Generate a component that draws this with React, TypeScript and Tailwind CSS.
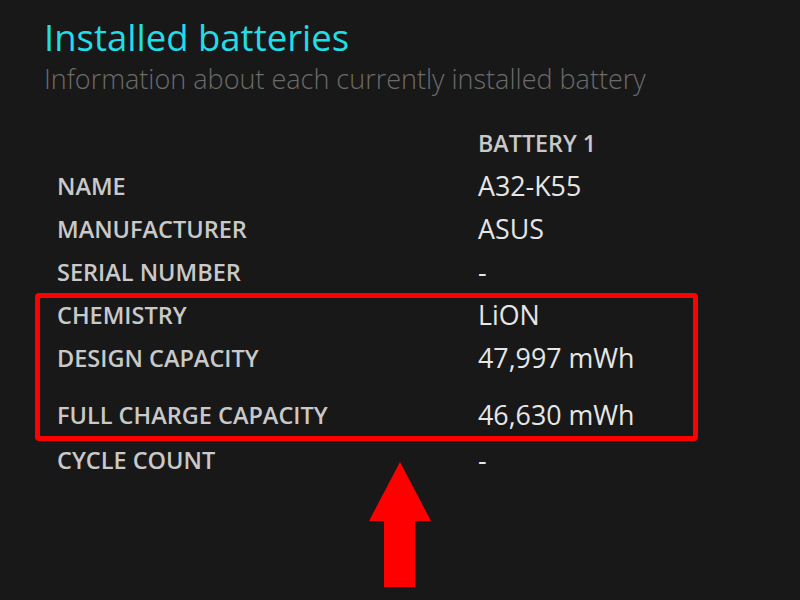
import React from "react";

const rows: { label: string; value: string; extra?: string }[] = [
  { label: "NAME", value: "A32-K55" },
  { label: "MANUFACTURER", value: "ASUS" },
  { label: "SERIAL NUMBER", value: "-" },
  { label: "CHEMISTRY", value: "LiON" },
  { label: "DESIGN CAPACITY", value: "47,997 mWh" },
  { label: "FULL CHARGE CAPACITY", value: "46,630 mWh", extra: "mt-[14px]" },
  { label: "CYCLE COUNT", value: "-", extra: "mt-[2px]" },
];

export default function App() {
  return (
    <div
      className="relative w-[800px] h-[600px] overflow-hidden bg-[#181818]"
      style={{ fontFamily: '"Open Sans", "Noto Sans", sans-serif' }}
    >
      <div className="pl-[44px] pt-[14px]">
        <h1 className="text-[36.5px] leading-[46px] text-[#22dde6] font-normal">
          Installed batteries
        </h1>
        <p className="text-[27px] leading-[38px] text-[#6b6b6b] font-light">
          Information about each currently installed battery
        </p>
      </div>
      <div className="pl-[57px] mt-[24px]">
        <div className="flex h-[43px] items-center">
          <div className="w-[421px]" />
          <div className="text-[23.3px] font-semibold text-[#c9c9c9]">BATTERY 1</div>
        </div>
        {rows.map((r) => (
          <div key={r.label} className={`flex h-[43px] items-center ${r.extra ?? ""}`}>
            <div className="w-[421px] text-[23.5px] font-semibold text-[#c9c9c9]">{r.label}</div>
            <div className="text-[26.8px] text-[#e6e6e6]">{r.value}</div>
          </div>
        ))}
      </div>
      <div className="absolute left-[35px] top-[293px] w-[663px] h-[148px] border-[5px] border-[#ff0000] rounded-[4px]" />
      <svg className="absolute left-[368px] top-[460px]" width="64" height="130" viewBox="0 0 64 130">
        <polygon points="32,2 63,61 47,61 47,127 16,127 16,61 1,61" fill="#ff0000" />
      </svg>
    </div>
  );
}
